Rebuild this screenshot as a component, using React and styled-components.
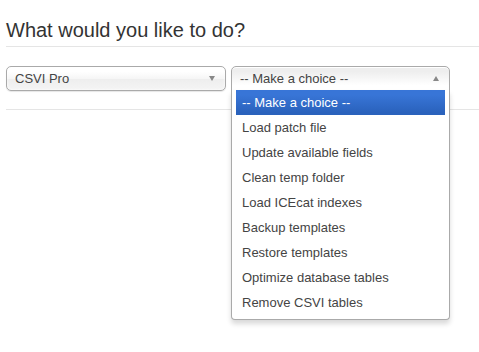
import styled, { createGlobalStyle } from "styled-components"

const GlobalStyle = createGlobalStyle`
    html, body {
        margin:0;
        padding:0;
        background:#fff;
    }
    body {
        font-family:"Liberation Sans", Arial, sans-serif;
        font-size:13px;
        color:#444;
    }
`

const Page = styled.div`
    padding:0 0 0 6px;
    width:473px;
    height:352px;
    overflow:hidden;
`

const Title = styled.h3`
    margin:0;
    padding:16px 0 0 0;
    font-size:20px;
    line-height:28px;
    font-weight:normal;
    color:#333;
`

const Divider = styled.div`
    height:0;
    border-top:1px solid #e5e5e5;
    margin:${props => props.$margin};
`

const Row = styled.div`
    display:flex;
    gap:5px;
    align-items:flex-start;
`

const Select = styled.div`
    position:relative;
    width:${props => props.$width}px;
`

const Head = styled.div`
    box-sizing:border-box;
    height:25px;
    display:flex;
    align-items:center;
    justify-content:space-between;
    padding:0 10px 0 8px;
    border:1px solid #aaa;
    border-radius:${props => props.$open ? "5px 5px 0 0" : "5px"};
    background:${props => props.$open
        ? "linear-gradient(#eee 20%, #fff 80%)"
        : "linear-gradient(#fff 20%, #f6f6f6 50%, #eee 52%, #f4f4f4 100%)"};
    box-shadow:${props => props.$open
        ? "0 1px 0 #fff inset"
        : "0 0 3px #fff inset, 0 1px 1px rgba(0,0,0,0.1)"};
    color:#444;
    font-size:13px;
    line-height:24px;
`

const Arrow = styled.span`
    width:0;
    height:0;
    border-left:3.5px solid transparent;
    border-right:3.5px solid transparent;
    border-top:${props => props.$up ? "0" : "5px solid #888"};
    border-bottom:${props => props.$up ? "5px solid #888" : "0"};
`

const Drop = styled.div`
    position:absolute;
    top:24px;
    left:0;
    right:0;
    box-sizing:border-box;
    background:#fff;
    border:1px solid #aaa;
    border-top:0;
    border-radius:0 0 4px 4px;
    box-shadow:0 4px 5px rgba(0,0,0,0.15);
    z-index:5;
`

const Results = styled.ul`
    list-style:none;
    margin:0 4px 4px 0;
    padding:0 0 0 4px;
`

const Item = styled.li`
    padding:5px 6px;
    line-height:15px;
    font-size:13px;
    color:${props => props.$active ? "#fff" : "#444"};
    background:${props => props.$active ? "linear-gradient(#3875d7 20%, #2a62bc 90%)" : "transparent"};
`

const options = [
    "-- Make a choice --",
    "Load patch file",
    "Update available fields",
    "Clean temp folder",
    "Load ICEcat indexes",
    "Backup templates",
    "Restore templates",
    "Optimize database tables",
    "Remove CSVI tables",
]

const App = () => {
    return (
        <>
            <GlobalStyle />
            <Page>
                <Title>What would you like to do?</Title>
                <Divider $margin="2px 0 19px 0" />
                <Row>
                    <Select $width={220}>
                        <Head>
                            <span>CSVI Pro</span>
                            <Arrow />
                        </Head>
                    </Select>
                    <Select $width={219}>
                        <Head $open>
                            <span>-- Make a choice --</span>
                            <Arrow $up />
                        </Head>
                        <Drop>
                            <Results>
                                {options.map((o, i) => (
                                    <Item key={o} $active={i === 0}>{o}</Item>
                                ))}
                            </Results>
                        </Drop>
                    </Select>
                </Row>
                <Divider $margin="18px 0 0 0" />
            </Page>
        </>
    )
}

export default App
